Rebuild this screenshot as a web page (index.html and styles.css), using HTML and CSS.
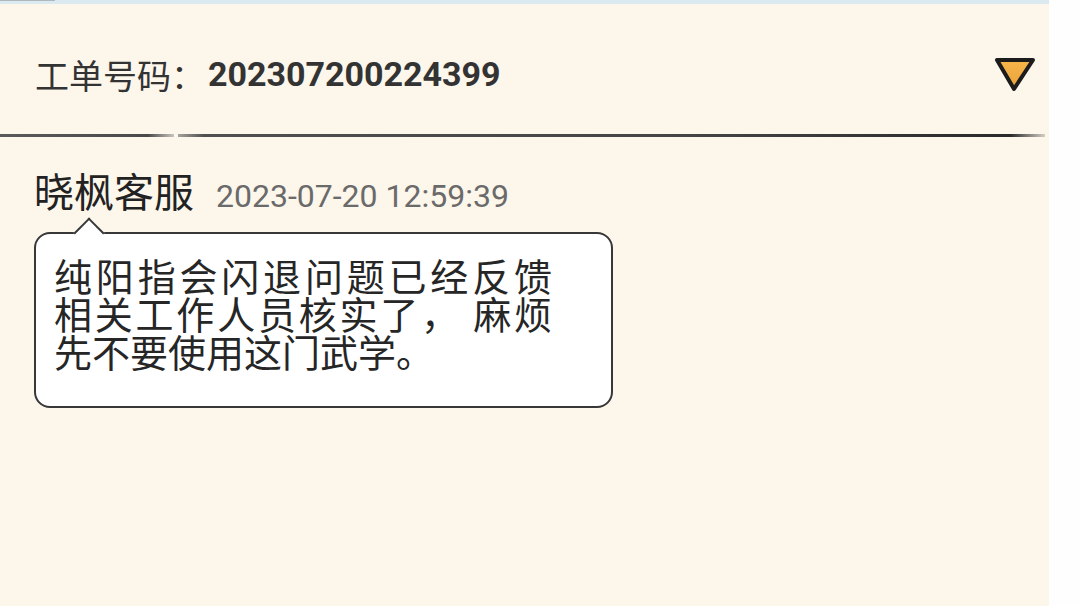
FILE: index.html
```html
<!DOCTYPE html>
<html lang="zh-CN">
<head>
    <meta charset="UTF-8">
    <meta name="viewport" content="width=device-width, initial-scale=1.0">
    <title>工单详情</title>
    <link rel="stylesheet" href="styles.css">
</head>
<body>
    <div class="panel">
        <div class="top-strip"><div class="strip-mark"></div></div>
        <div class="ticket">
            <div class="ticket-no">
                <span class="ticket-label">工单号码：</span><span class="ticket-value">202307200224399</span>
            </div>
            <svg class="toggle" width="44" height="38" viewBox="0 0 44 38">
                <defs>
                    <linearGradient id="tri" x1="0" y1="0" x2="0" y2="1">
                        <stop offset="0" stop-color="#f7b64a"/>
                        <stop offset="1" stop-color="#e9a23a"/>
                    </linearGradient>
                </defs>
                <polygon points="4,4 40,4 21,33" fill="url(#tri)" stroke="#1c1c1c" stroke-width="4" stroke-linejoin="round"/>
            </svg>
        </div>
        <div class="divider">
            <div class="divider-left"></div>
            <div class="divider-right"></div>
        </div>
        <div class="message">
            <div class="sender">
                <span class="sender-name">晓枫客服</span>
                <span class="sender-time">2023-07-20 12:59:39</span>
            </div>
            <div class="bubble">
                <p class="bubble-text">
                    <span class="line fill">纯阳指会闪退问题已经反馈</span>
                    <span class="line fill">相关工作人员核实了， 麻烦</span>
                    <span class="line">先不要使用这门武学。</span>
                </p>
            </div>
        </div>
    </div>
</body>
</html>
```

FILE: styles.css
```css
body {
    margin: 0;
    background-color: #fefefe;
    font-family: "Noto Sans CJK SC", Roboto, sans-serif;
    color: #2b2b2b;
}
.panel {
    width: 1049px;
    height: 606px;
    background-color: #fdf6eb;
}
.top-strip {
    height: 4px;
    background-color: #dbe9f1;
}
.strip-mark {
    width: 55px;
    height: 1px;
    background-color: #aeb8bd;
}
.ticket {
    height: 130px;
    padding: 10px 12px 0 35px;
    display: flex;
    align-items: center;
    justify-content: space-between;
    box-sizing: border-box;
}
.ticket-no {
    display: flex;
    align-items: center;
    color: #333;
}
.ticket-label {
    font-size: 34px;
}
.ticket-value {
    font-family: Roboto, sans-serif;
    font-size: 34px;
    font-weight: 700;
    margin-left: 3px;
}
.toggle {
    margin-top: 2px;
}
.divider {
    display: flex;
    gap: 4px;
    height: 3px;
    padding-right: 4px;
}
.divider-left {
    width: 174px;
    background: linear-gradient(to right, #5a5a5a, #4a4a4a 85%, rgba(80, 80, 80, 0.3));
}
.divider-right {
    flex: 1;
    background: linear-gradient(to right, rgba(80, 80, 80, 0.5), #505050 3%, #444 60%, #2a2a2a 96%, rgba(40, 40, 40, 0.2));
}
.message {
    padding: 31px 0 0 34px;
}
.sender {
    display: flex;
    align-items: baseline;
    gap: 22px;
    height: 44px;
    line-height: 44px;
}
.sender-name {
    font-size: 40px;
    color: #222;
}
.sender-time {
    font-family: Roboto, sans-serif;
    font-size: 32px;
    color: #6a6a6a;
}
.bubble {
    position: relative;
    margin-top: 20px;
    width: 579px;
    height: 176px;
    box-sizing: border-box;
    border: 2px solid #383838;
    border-radius: 16px;
    background-color: #fff;
    padding: 22px 0 0 18px;
}
.bubble::before {
    content: "";
    position: absolute;
    left: 42px;
    top: -12px;
    width: 22px;
    height: 22px;
    box-sizing: border-box;
    background-color: #fff;
    border-top: 2px solid #383838;
    border-left: 2px solid #383838;
    transform: rotate(45deg);
}
.bubble-text {
    margin: 0;
    width: 498px;
    font-size: 38px;
    line-height: 38px;
    color: #262626;
}
.line {
    display: block;
}
.line.fill {
    text-align: justify;
    text-align-last: justify;
}
```
